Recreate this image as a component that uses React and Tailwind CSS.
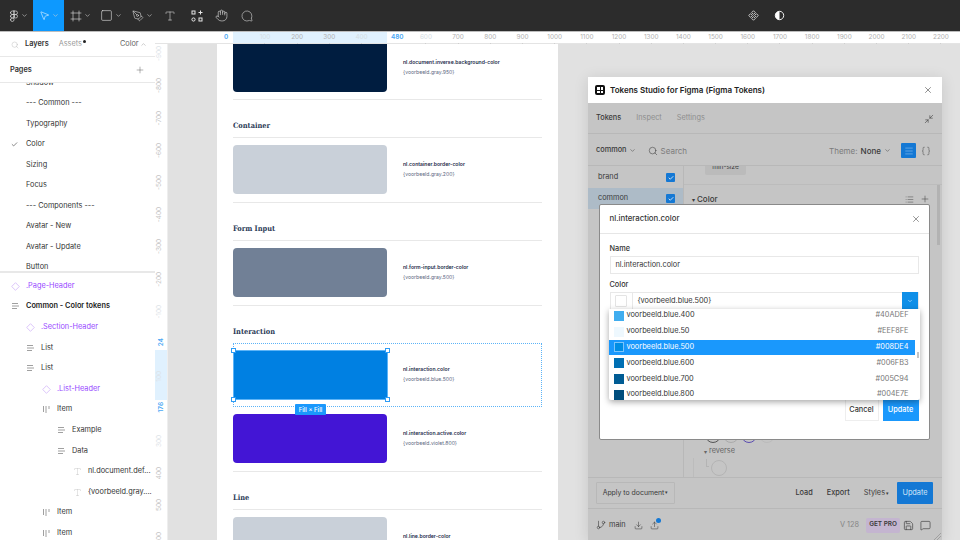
import {
  Braces, Check, ChevronDown, ChevronUp, Download, Figma, Frame, GitBranch, Hand, List, Menu,
  MessageCircle, MessageSquare, Minimize2, MousePointer2, PenTool, Plus, Save, Search, Square, Type, Upload, X,
} from "lucide-react";

const pages = ["Shadow", "--- Common ---", "Typography", "Color", "Sizing", "Focus", "--- Components ---", "Avatar - New", "Avatar - Update", "Button"];

const layers = [
  { name: ".Page-Header", icon: "diamond", indent: "pl-[11px]", purple: true },
  { name: "Common - Color tokens", icon: "bars", indent: "pl-[11px]", strong: true },
  { name: ".Section-Header", icon: "diamond", indent: "pl-[26px]", purple: true },
  { name: "List", icon: "bars", indent: "pl-[26px]" },
  { name: "List", icon: "bars", indent: "pl-[26px]" },
  { name: ".List-Header", icon: "diamond", indent: "pl-[42px]", purple: true },
  { name: "Item", icon: "cols", indent: "pl-[42px]" },
  { name: "Example", icon: "bars", indent: "pl-[57px]" },
  { name: "Data", icon: "bars", indent: "pl-[57px]" },
  { name: "nl.document.def...", icon: "text", indent: "pl-[73px]" },
  { name: "{voorbeeld.gray....", icon: "text", indent: "pl-[73px]" },
  { name: "Item", icon: "cols", indent: "pl-[42px]" },
  { name: "Item", icon: "cols", indent: "pl-[42px]" },
];

const topTicks = [
  ["100", true], ["200"], ["300"], ["400", true], [""], ["600", true], ["700"], ["800"], ["900"], ["1000"], ["1100"], ["1200"],
  ["1300"], ["1400"], ["1500"], ["1600"], ["1700"], ["1800"], ["1900"], ["2000"], ["2100"], ["2200"],
];

const leftTicks = [
  ["-900", true], ["-800"], ["-700"], ["-600"], ["-500"], ["-400"], ["-300"], ["-200"], ["-100", true], [""], ["100", true], [""], ["300", true], ["400"], ["500"], ["600"],
];

const options = [
  { name: "voorbeeld.blue.400", hex: "#40ADEF", color: "bg-[#40adef]" },
  { name: "voorbeeld.blue.50", hex: "#EEF8FE", color: "bg-[#eef8fe]" },
  { name: "voorbeeld.blue.500", hex: "#008DE4", color: "bg-[#008de4]", active: true },
  { name: "voorbeeld.blue.600", hex: "#006FB3", color: "bg-[#006fb3]" },
  { name: "voorbeeld.blue.700", hex: "#005C94", color: "bg-[#005c94]" },
  { name: "voorbeeld.blue.800", hex: "#004E7E", color: "bg-[#004e7e]" },
];

function ToolChevron() {
  return <ChevronDown size={7} strokeWidth={2} className="text-[#d0d0d0]" />;
}

function Toolbar() {
  return (
    <div className="flex h-[32px] shrink-0 items-center border-b border-[#bdbdbd] bg-[#2c2c2c] text-[#e6e6e6]">
      <div className="flex w-[33px] items-center justify-center gap-[1px] pl-[2px]">
        <Figma size={12} strokeWidth={1.3} />
        <ToolChevron />
      </div>
      <div className="flex h-full w-[31px] items-center justify-center gap-[2px] bg-[#0d99ff] pl-[1px]">
        <MousePointer2 size={11} strokeWidth={1.2} className="text-white" />
        <ToolChevron />
      </div>
      <div className="flex w-[31px] items-center justify-center gap-[2px] pl-[1px]">
        <Frame size={12} strokeWidth={1.2} />
        <ToolChevron />
      </div>
      <div className="flex w-[31px] items-center justify-center gap-[2px] pl-[1px]">
        <Square size={13} strokeWidth={1.1} />
        <ToolChevron />
      </div>
      <div className="flex w-[31px] items-center justify-center gap-[2px] pl-[1px]">
        <PenTool size={12} strokeWidth={1.1} />
        <ToolChevron />
      </div>
      <div className="flex w-[25px] items-center justify-center">
        <Type size={12} strokeWidth={1.1} />
      </div>
      <div className="flex w-[29px] items-center justify-center">
        <svg width="12" height="12" viewBox="0 0 12 12" fill="none" stroke="currentColor" strokeWidth="1">
          <rect x="1" y="1" width="3" height="3" />
          <path d="M9.5 0.5v4M7.5 2.5h4" />
          <circle cx="2.5" cy="9.5" r="1.6" />
          <rect x="8" y="8" width="3" height="3" />
        </svg>
      </div>
      <div className="flex w-[20px] items-center justify-center">
        <Hand size={13} strokeWidth={1.1} />
      </div>
      <div className="flex w-[32px] items-center justify-center">
        <MessageCircle size={12} strokeWidth={1.1} className="-scale-x-100" />
      </div>
      <div className="ml-[485px] flex items-center gap-[15px]">
        <svg width="11" height="11" viewBox="0 0 12 12" fill="none" stroke="currentColor" strokeWidth="0.9">
          <path d="M6 .8 8 2.8 6 4.8 4 2.8ZM6 7.2 8 9.2 6 11.2 4 9.2ZM2.8 4 4.8 6 2.8 8 .8 6ZM9.2 4 11.2 6 9.2 8 7.2 6Z" />
        </svg>
        <svg width="11" height="11" viewBox="0 0 12 12" fill="none">
          <circle cx="6" cy="6" r="4.6" stroke="white" strokeWidth="1" />
          <path d="M6 1.4a4.6 4.6 0 0 0 0 9.2Z" fill="white" />
        </svg>
      </div>
    </div>
  );
}

function LayerIcon({ type }) {
  if (type === "diamond") {
    return (
      <svg width="9" height="9" viewBox="0 0 9 9" fill="none" stroke="#d8bff9" strokeWidth="0.9">
        <path d="M4.5.7 8.3 4.5 4.5 8.3.7 4.5Z" />
      </svg>
    );
  }
  if (type === "text") {
    return <Type size={9} strokeWidth={1} className="text-[#b8b8b8]" />;
  }
  if (type === "cols") {
    return (
      <svg width="9" height="9" viewBox="0 0 9 9" fill="none" stroke="#a0a0a0" strokeWidth="1">
        <path d="M1.5 1v6M4 1v7M7 1v3" />
      </svg>
    );
  }
  return (
    <svg width="9" height="9" viewBox="0 0 9 9" fill="none" stroke="#a0a0a0" strokeWidth="1">
      <path d="M1 1.5h6M1 4h7M1 6.5h5" />
    </svg>
  );
}

function Sidebar() {
  return (
    <aside className="flex w-[155px] shrink-0 flex-col overflow-hidden bg-white text-[7.33px] text-[#333]">
      <div className="flex h-[25px] shrink-0 items-center border-b border-[#e8e8e8] pl-[11px] pt-[1px]">
        <Search size={8} strokeWidth={1.2} className="text-[#b0b0b0]" />
        <span className="ml-[6px] font-semibold">Layers</span>
        <span className="relative ml-[10px] text-[#999]">
          Assets
          <span className="absolute -right-[4px] top-[1px] size-[3px] rounded-full bg-[#222]" />
        </span>
        <span className="ml-[38px] text-[#666]">Color</span>
        <ChevronUp size={7} className="ml-[1px] text-[#aaa]" />
      </div>
      <div className="flex h-[26px] shrink-0 items-center justify-between border-b border-[#e8e8e8] pl-[10px] pr-[10px] pt-[1px]">
        <span className="font-semibold">Pages</span>
        <Plus size={10} strokeWidth={1} className="text-[#444]" />
      </div>
      <div className="h-[190px] shrink-0 overflow-hidden border-b-2 border-[#e8e8e8]">
        <div className="-mt-[10px]">
          {pages.map((page) => (
            <div key={page} className="relative flex h-[20.5px] items-center pl-[26px]">
              {page === "Color" && <Check size={7} strokeWidth={2} className="absolute left-[11px] text-[#333]" />}
              {page}
            </div>
          ))}
        </div>
      </div>
      <div className="pt-[3px]">
        {layers.map((layer, i) => (
          <div key={i} className={`flex h-[20.6px] items-center gap-[2px] ${layer.indent}`}>
            <span className="flex w-[13px] shrink-0 justify-start">
              <LayerIcon type={layer.icon} />
            </span>
            <span className={layer.purple ? "text-[#9747ff]" : layer.strong ? "font-semibold text-[#222]" : ""}>{layer.name}</span>
          </div>
        ))}
      </div>
    </aside>
  );
}

function TopRuler() {
  return (
    <div className="relative flex h-[12px] shrink-0 items-stretch border-b border-[#e4e4e4] bg-white pl-[93.9px] text-[6.4px] text-[#b0b0b0]">
      <div className="absolute left-[78px] top-0 h-full w-[154px] bg-[#e0f1fe]" />
      <span className="absolute left-[69px] top-[1px] font-semibold text-[#4aa8f5]">0</span>
      <span className="absolute left-[236px] top-[1px] font-semibold text-[#4aa8f5]">480</span>
      {topTicks.map(([label, faint], i) => (
        <div key={i} className={`relative flex w-[32.2px] shrink-0 flex-col items-center justify-between pt-[1px] ${faint ? "text-[#d4dde3]" : ""}`}>
          <span>{label}</span>
          {label && <span className="h-[2px] w-px bg-[#cfcfcf]" />}
        </div>
      ))}
    </div>
  );
}

function LeftRuler() {
  return (
    <div className="relative w-[13px] shrink-0 overflow-hidden border-r border-[#eeeeee] bg-white text-[6.4px] text-[#c4c4c4]">
      <div className="absolute left-0 top-[306px] h-[50px] w-full bg-[#e0f1fe]" />
      <span className="absolute left-[2px] top-[294px] font-semibold text-[#4aa8f5] [writing-mode:vertical-rl] rotate-180">24</span>
      <span className="absolute left-[2px] top-[358px] font-semibold text-[#4aa8f5] [writing-mode:vertical-rl] rotate-180">176</span>
      <div className="relative -mt-[7px]">
        {leftTicks.map(([label, faint], i) => (
          <div key={i} className={`flex h-[32.3px] items-center justify-between ${faint ? "text-[#dde3e8]" : ""}`}>
            <span className="pl-[2px] [writing-mode:vertical-rl] rotate-180">{label}</span>
            {label && <span className="h-px w-[2px] bg-[#cfcfcf]" />}
          </div>
        ))}
      </div>
    </div>
  );
}

function TokenRow({ name, value, color, selected, short }) {
  return (
    <div className={`relative flex items-center gap-[16px] pt-[7px] ${selected || short ? "pb-[7px]" : "pb-[8px]"}`}>
      <div className={`${short ? "h-[48px] rounded-b-[4px]" : selected ? "h-[50px]" : "h-[49px] rounded-[4px]"} w-[154px] shrink-0 ${color}`} />
      <div className="-mt-[2px] flex flex-col gap-[4px] text-[5.1px] leading-[6px]">
        <span className="font-semibold text-[#1c2b4a]">{name}</span>
        <span className="text-[#5b6780]">{value}</span>
      </div>
      {selected && (
        <>
          <div className="absolute inset-0 border border-dotted border-[#5db4f7]" />
          <div className="absolute left-0 top-[7px] h-[50px] w-[155px] border border-[#5db4f7]" />
          <span className="absolute -left-[2px] top-[5px] size-[5px] border border-[#2d9cf5] bg-white" />
          <span className="absolute left-[152px] top-[5px] size-[5px] border border-[#2d9cf5] bg-white" />
          <span className="absolute -left-[2px] top-[54px] size-[5px] border border-[#2d9cf5] bg-white" />
          <span className="absolute left-[152px] top-[54px] size-[5px] border border-[#2d9cf5] bg-white" />
          <span className="absolute left-[62px] top-[61px] z-10 flex h-[11px] w-[31px] items-center justify-center rounded-[1px] bg-[#1a98fc] text-[6px] font-medium text-white">
            Fill × Fill
          </span>
        </>
      )}
    </div>
  );
}

function Heading({ children, line = true }) {
  return (
    <div className={`flex h-[38px] items-center pt-[14px] text-[7.4px] font-bold text-[#2a3a56] [font-family:'DejaVu_Serif_Condensed','DejaVu_Serif',serif] ${line ? "border-b border-[#e8e8e8]" : ""}`}>
      {children}
    </div>
  );
}

function DesignPage() {
  return (
    <div className="h-full w-[341px] shrink-0 overflow-hidden bg-white px-[16px]">
      <div className="-mt-[7px] border-b border-[#e8e8e8]">
        <TokenRow short name="nl.document.inverse.background-color" value="{voorbeeld.gray.950}" color="bg-[#001d40]" />
      </div>
      <div className="border-b border-[#e8e8e8]">
        <Heading>Container</Heading>
        <TokenRow name="nl.container.border-color" value="{voorbeeld.gray.200}" color="bg-[#c9d0d9]" />
      </div>
      <div className="border-b border-[#e8e8e8]">
        <Heading>Form Input</Heading>
        <TokenRow name="nl.form-input.border-color" value="{voorbeeld.gray.500}" color="bg-[#718096]" />
      </div>
      <div className="border-b border-[#e8e8e8]">
        <div className="-mb-[1px]">
          <Heading line={false}>Interaction</Heading>
        </div>
        <TokenRow selected name="nl.interaction.color" value="{voorbeeld.blue.500}" color="bg-[#0080e2]" />
        <TokenRow name="nl.interaction.active.color" value="{voorbeeld.violet.800}" color="bg-[#4315d5]" />
      </div>
      <div>
        <Heading>Line</Heading>
        <TokenRow name="nl.line.border-color" value="{voorbeeld.gray.200}" color="bg-[#c9d0d9]" />
      </div>
    </div>
  );
}

function Modal() {
  return (
    <div className="absolute left-[10.5px] top-[101px] z-10 h-[236px] w-[331px] rounded-[2px] border border-[#8a8a8a] bg-white text-[#333]">
      <div className="flex h-[29px] items-center justify-between border-b border-[#e6e6e6] pl-[10px] pr-[8px]">
        <span className="text-[7.8px] font-medium">nl.interaction.color</span>
        <X size={10} strokeWidth={1.2} />
      </div>
      <div className="px-[10px] pt-[10px] text-[7.33px]">
        <div className="mb-[2px] h-[10px] font-medium leading-[10px]">Name</div>
        <div className="flex h-[18px] items-center border border-[#e8e8e8] pl-[5px]">nl.interaction.color</div>
        <div className="mb-[2px] mt-[6px] h-[10px] font-medium leading-[10px]">Color</div>
        <div className="flex h-[18px] items-center border border-[#e8e8e8]">
          <div className="flex h-full w-[22px] items-center justify-center border-r border-[#e8e8e8]">
            <span className="size-[12px] rounded-[1px] border border-[#e4e4e4] bg-white" />
          </div>
          <span className="ml-[5px] flex-1">{"{voorbeeld.blue.500}"}</span>
          <span className="flex h-[18px] w-[16px] items-center justify-center bg-[#0f8fe8] text-white">
            <ChevronDown size={6} strokeWidth={2} />
          </span>
        </div>
        <div className="absolute left-[9px] top-[104px] z-20 h-[91px] w-[311px] overflow-hidden rounded-b-[2px] bg-white shadow-[0_2px_6px_rgba(0,0,0,0.35)]">
          <div className="-mt-[1px] pr-[5px]">
            {options.map((o) => (
              <div key={o.name} className={`flex h-[15.8px] items-center justify-between pl-[5px] pr-[6px] ${o.active ? "bg-[#1a98fc] text-white" : ""}`}>
                <span className="flex items-center gap-[3px]">
                  <span className={`size-[10px] ${o.color} ${o.active ? "border border-[#7cc4fb]" : ""}`} />
                  {o.name}
                </span>
                <span className={o.active ? "text-white" : "text-[#777]"}>{o.hex}</span>
              </div>
            ))}
          </div>
          <span className="absolute right-[1px] top-[43px] h-[6px] w-[2px] bg-[#c4c4c4]" />
        </div>
      </div>
      <div className="absolute right-[10px] top-[194px] flex gap-[4px]">
        <button className="flex h-[22px] w-[34px] items-center justify-center border border-[#eeeeee] text-[7.33px] font-medium">Cancel</button>
        <button className="flex h-[22px] w-[36px] items-center justify-center bg-[#1a98fc] text-[7.33px] font-medium text-white">Update</button>
      </div>
    </div>
  );
}

function PluginWindow() {
  return (
    <div className="absolute left-[420px] top-[33px] flex h-[463px] w-[354px] flex-col text-[7.33px] text-[#3a3a3a] shadow-[0_2px_14px_rgba(0,0,0,0.12)]">
      <div className="flex h-[26px] shrink-0 items-center justify-between bg-white pl-[7px] pr-[9px]">
        <div className="flex items-center gap-[5px]">
          <span className="grid size-[10px] grid-cols-2 content-center gap-[1px] rounded-[2px] bg-[#111] p-[2px]">
            <span className="h-[2.5px] bg-white" />
            <span className="h-[2.5px] bg-white" />
            <span className="h-[2.5px] bg-white" />
            <span className="h-[2.5px] bg-white" />
          </span>
          <span className="text-[8px] font-semibold text-[#222]">Tokens Studio for Figma (Figma Tokens)</span>
        </div>
        <X size={10} strokeWidth={1.2} className="text-[#222]" />
      </div>
      <div className="relative flex min-h-0 flex-1 flex-col bg-[#c5c5c5]">
        <div className="flex h-[31px] shrink-0 items-center border-b border-[#b8b8b8] pl-[8px] pr-[8px] pt-[1px]">
          <span className="font-medium">Tokens</span>
          <span className="ml-[15px] text-[#8d8d8d]">Inspect</span>
          <span className="ml-[15px] text-[#8d8d8d]">Settings</span>
          <Minimize2 size={10} strokeWidth={1.3} className="ml-auto text-[#333]" />
        </div>
        <div className="flex h-[32px] shrink-0 items-center border-b border-[#b8b8b8] pl-[8px] pr-[11px] pt-[2px]">
          <span className="font-medium">common</span>
          <ChevronDown size={7} strokeWidth={1.6} className="ml-[2px]" />
          <Search size={10} strokeWidth={1.3} className="ml-[12px]" />
          <span className="ml-[3px] text-[8px] text-[#7c7c7c]">Search</span>
          <span className="ml-auto text-[8px] text-[#7c7c7c]">Theme:</span>
          <span className="ml-[3px] text-[8px] font-medium">None</span>
          <ChevronDown size={7} strokeWidth={1.6} className="ml-[3px]" />
          <span className="ml-[10px] flex size-[15px] items-center justify-center rounded-[1px] bg-[#1478d4] text-[#a8d0f5]">
            <Menu size={10} strokeWidth={1.2} />
          </span>
          <Braces size={10} strokeWidth={1.1} className="ml-[5px]" />
        </div>
        <div className="relative flex min-h-0 flex-1">
          <div className="w-[96px] shrink-0 border-r border-[#b8b8b8] pt-[1px]">
            <div className="flex h-[21px] items-center justify-between pl-[10px] pr-[8px]">
              brand
              <span className="flex size-[9px] items-center justify-center rounded-[1px] bg-[#1478d4] text-white"><Check size={6} strokeWidth={3} /></span>
            </div>
            <div className="flex h-[21px] items-center justify-between bg-[#adbbc7] pl-[10px] pr-[8px]">
              common
              <span className="flex size-[9px] items-center justify-center rounded-[1px] bg-[#1478d4] text-white"><Check size={6} strokeWidth={3} /></span>
            </div>
          </div>
          <div className="relative flex min-w-0 flex-1 flex-col">
            <div className="h-[19px] shrink-0 overflow-hidden border-b border-[#bcbcbc] pl-[21px]">
              <span className="-mt-[3px] block h-[12px] w-[41px] rounded-[2px] bg-[#bbbbbb] text-center text-[6.5px] leading-[8px]">min-size</span>
            </div>
            <div className="flex h-[28px] shrink-0 items-center pl-[8px] pr-[12px]">
              <span className="text-[6px]">▾</span>
              <span className="ml-[2px] text-[8px] font-medium">Color</span>
              <List size={9} strokeWidth={1.2} className="ml-auto" />
              <Plus size={10} strokeWidth={1.2} className="ml-[6px]" />
            </div>
            <div className="mb-[2px] mt-auto flex h-[6px] items-end gap-[2px] overflow-hidden pl-[21px]">
              <span className="size-[16px] shrink-0 rounded-full border border-[#555]" />
              <span className="size-[16px] shrink-0 rounded-full border border-[#aaa]" />
              <span className="size-[16px] shrink-0 rounded-full border border-[#5a4bb0]" />
              <span className="size-[16px] shrink-0 rounded-full border border-[#bbb]" />
            </div>
            <div className="flex h-[13px] items-center pl-[20px] text-[#666]">
              <span className="text-[6px]">▾</span>
              <span className="ml-[2px]">reverse</span>
            </div>
            <div className="ml-[9px] flex h-[19px] items-start gap-[2px] border-l border-[#bcbcbc] pl-[12px] pt-[2px]">
              <span className="-mt-[1px] h-[8px] w-[3px] border-b border-l border-[#b4b4b4]" />
              <span className="size-[16px] rounded-full border border-[#b4b4b4]" />
            </div>
            <span className="absolute right-[2px] top-[19px] h-[60px] w-[3px] bg-[#b2b2b2]" />
          </div>
        </div>
        <div className="flex h-[32px] shrink-0 items-center border-y border-[#b8b8b8] pl-[8px] pr-[9px]">
          <span className="flex h-[22px] w-[79px] items-center justify-center rounded-[1px] border border-[#b8b8b8] text-[6.9px]">Apply to document<span className="ml-[1px] text-[5px]">▾</span></span>
          <span className="ml-auto font-medium">Load</span>
          <span className="ml-[14px] font-medium">Export</span>
          <span className="ml-[14px]">Styles<span className="ml-[1px] text-[5px]">▾</span></span>
          <span className="ml-[8px] flex h-[22px] w-[36px] items-center justify-center rounded-[1px] bg-[#1478d4] text-[#d5e8f8]">Update</span>
        </div>
        <div className="relative flex h-[31px] shrink-0 items-center pl-[8px] pr-[11px] pt-[1px]">
          <GitBranch size={10} strokeWidth={1.4} />
          <span className="ml-[3px]">main</span>
          <Download size={9} strokeWidth={1.4} className="ml-[8px]" />
          <span className="relative ml-[7px]">
            <Upload size={9} strokeWidth={1.4} />
            <span className="absolute -right-[2px] -top-[3px] size-[5px] rounded-full bg-[#1478d4]" />
          </span>
          <span className="ml-auto text-[#858585]">V 128</span>
          <span className="ml-[7px] flex h-[15px] w-[34px] items-center justify-center rounded-[2px] bg-[#c4b5d0] text-[6.4px] font-semibold">GET PRO</span>
          <Save size={11} strokeWidth={1.4} className="ml-[3px]" />
          <MessageSquare size={11} strokeWidth={1.4} className="ml-[6px]" />
          <svg width="7" height="7" viewBox="0 0 7 7" fill="none" stroke="#8f8f8f" strokeWidth="0.7" className="absolute bottom-0 right-[1px]">
            <path d="M0 7 7 0M3 7l4-4" />
          </svg>
        </div>
        <Modal />
      </div>
    </div>
  );
}

export default function App() {
  return (
    <div className="flex h-[540px] w-[960px] flex-col overflow-hidden bg-[#e1e1e1] [font-family:Inter,sans-serif]">
      <Toolbar />
      <div className="flex min-h-0 flex-1">
        <Sidebar />
        <div className="flex min-w-0 flex-1 flex-col">
          <TopRuler />
          <div className="flex min-h-0 flex-1">
            <LeftRuler />
            <main className="relative min-w-0 flex-1 overflow-hidden bg-[#e1e1e1] pl-[49px]">
              <DesignPage />
              <PluginWindow />
            </main>
          </div>
        </div>
      </div>
    </div>
  );
}
